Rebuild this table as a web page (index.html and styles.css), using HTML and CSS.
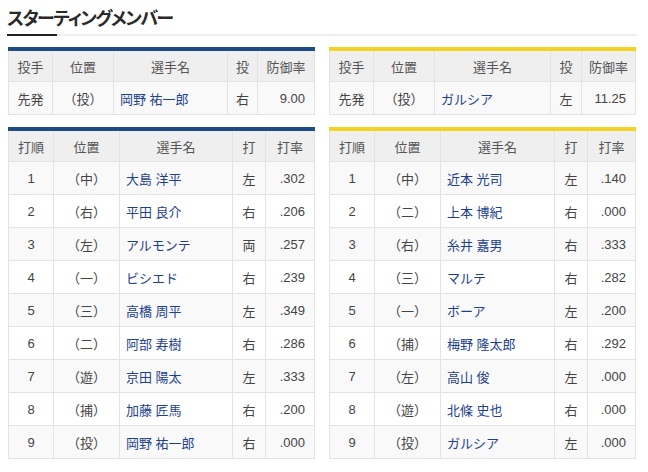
FILE: index.html
```html
<!DOCTYPE html>
<html lang="ja">
<head>
<meta charset="utf-8">
<link rel="stylesheet" href="styles.css">
</head>
<body>
<div class="page">
  <h2 class="title">スターティングメンバー</h2>
  <div class="grid">
    <table class="tbl blue pit-l">
      <colgroup><col class="c1"><col class="c2"><col class="c3"><col class="c4"><col class="c5"></colgroup>
      <thead><tr><th>投手</th><th>位置</th><th>選手名</th><th>投</th><th>防御率</th></tr></thead>
      <tbody><tr><td>先発</td><td>（投）</td><td class="name">岡野 祐一郎</td><td>右</td><td class="num">9.00</td></tr></tbody>
    </table>
    <table class="tbl yellow pit-r">
      <colgroup><col class="c1"><col class="c2"><col class="c3"><col class="c4"><col class="c5"></colgroup>
      <thead><tr><th>投手</th><th>位置</th><th>選手名</th><th>投</th><th>防御率</th></tr></thead>
      <tbody><tr><td>先発</td><td>（投）</td><td class="name">ガルシア</td><td>左</td><td class="num">11.25</td></tr></tbody>
    </table>
    <table class="tbl blue bat-l">
      <colgroup><col class="c1"><col class="c2"><col class="c3"><col class="c4"><col class="c5"></colgroup>
      <thead><tr><th>打順</th><th>位置</th><th>選手名</th><th>打</th><th>打率</th></tr></thead>
      <tbody>
        <tr><td>1</td><td>（中）</td><td class="name">大島 洋平</td><td>左</td><td class="num">.302</td></tr>
        <tr><td>2</td><td>（右）</td><td class="name">平田 良介</td><td>右</td><td class="num">.206</td></tr>
        <tr><td>3</td><td>（左）</td><td class="name">アルモンテ</td><td>両</td><td class="num">.257</td></tr>
        <tr><td>4</td><td>（一）</td><td class="name">ビシエド</td><td>右</td><td class="num">.239</td></tr>
        <tr><td>5</td><td>（三）</td><td class="name">高橋 周平</td><td>左</td><td class="num">.349</td></tr>
        <tr><td>6</td><td>（二）</td><td class="name">阿部 寿樹</td><td>右</td><td class="num">.286</td></tr>
        <tr><td>7</td><td>（遊）</td><td class="name">京田 陽太</td><td>左</td><td class="num">.333</td></tr>
        <tr><td>8</td><td>（捕）</td><td class="name">加藤 匠馬</td><td>右</td><td class="num">.200</td></tr>
        <tr><td>9</td><td>（投）</td><td class="name">岡野 祐一郎</td><td>右</td><td class="num">.000</td></tr>
      </tbody>
    </table>
    <table class="tbl yellow bat-r">
      <colgroup><col class="c1"><col class="c2"><col class="c3"><col class="c4"><col class="c5"></colgroup>
      <thead><tr><th>打順</th><th>位置</th><th>選手名</th><th>打</th><th>打率</th></tr></thead>
      <tbody>
        <tr><td>1</td><td>（中）</td><td class="name">近本 光司</td><td>左</td><td class="num">.140</td></tr>
        <tr><td>2</td><td>（二）</td><td class="name">上本 博紀</td><td>右</td><td class="num">.000</td></tr>
        <tr><td>3</td><td>（右）</td><td class="name">糸井 嘉男</td><td>右</td><td class="num">.333</td></tr>
        <tr><td>4</td><td>（三）</td><td class="name">マルテ</td><td>右</td><td class="num">.282</td></tr>
        <tr><td>5</td><td>（一）</td><td class="name">ボーア</td><td>左</td><td class="num">.200</td></tr>
        <tr><td>6</td><td>（捕）</td><td class="name">梅野 隆太郎</td><td>右</td><td class="num">.292</td></tr>
        <tr><td>7</td><td>（左）</td><td class="name">高山 俊</td><td>左</td><td class="num">.000</td></tr>
        <tr><td>8</td><td>（遊）</td><td class="name">北條 史也</td><td>右</td><td class="num">.000</td></tr>
        <tr><td>9</td><td>（投）</td><td class="name">ガルシア</td><td>左</td><td class="num">.000</td></tr>
      </tbody>
    </table>
  </div>
</div>
</body>
</html>
```
FILE: styles.css
```css
html, body {
  margin: 0;
  padding: 0;
  background: #ffffff;
}
body {
  font-family: "Liberation Sans", "Noto Sans CJK JP", sans-serif;
  color: #444444;
}
.page {
  padding: 4px 11px 0 7px;
  width: 630px;
}
.title {
  position: relative;
  margin: 0;
  font-family: "Noto Sans CJK JP", sans-serif;
  font-feature-settings: "palt";
  font-size: 18px;
  font-weight: bold;
  letter-spacing: -1.5px;
  line-height: 26px;
  color: #2a2a2a;
  padding-bottom: 4px;
  border-bottom: 2px solid #eeeeee;
}
.title::after {
  content: "";
  position: absolute;
  left: 0;
  bottom: -2px;
  width: 50px;
  height: 2px;
  background: #222222;
}
.grid {
  display: grid;
  grid-template-columns: 306px 306px;
  column-gap: 15px;
  row-gap: 12px;
  margin-top: 11px;
  padding-left: 1px;
}
.tbl {
  border-collapse: collapse;
  table-layout: fixed;
  width: 306px;
  font-size: 13px;
  border: 1px solid #e3e3e3;
}
.tbl.blue { border-top: 4px solid #1f4b85; }
.tbl.yellow { border-top: 4px solid #f3d425; }
.tbl th {
  background: #efefef;
  font-weight: normal;
  color: #555555;
  height: 30px;
  padding: 0;
  border-left: 1px solid #e3e3e3;
  border-bottom: 1px solid #e3e3e3;
  text-align: center;
}
.tbl td {
  height: 32px;
  padding: 0;
  border-left: 1px solid #e3e3e3;
  border-bottom: 1px solid #e3e3e3;
  text-align: center;
  color: #444444;
}
.tbl tbody tr:nth-child(odd) td { background: #f9f9f9; }
.tbl td.name {
  text-align: left;
  padding-left: 6px;
  color: #1d3f8f;
}
.tbl td.num {
  text-align: right;
  padding-right: 9px;
}
.pit-l .c1 { width: 44px; }
.pit-l .c2 { width: 61px; }
.pit-l .c3 { width: 114px; }
.pit-l .c4 { width: 30px; }
.pit-l .c5 { width: 57px; }
.pit-r .c1 { width: 44px; }
.pit-r .c2 { width: 61px; }
.pit-r .c3 { width: 116px; }
.pit-r .c4 { width: 31px; }
.pit-r .c5 { width: 54px; }
.bat-l .c1 { width: 45px; }
.bat-l .c2 { width: 66px; }
.bat-l .c3 { width: 113px; }
.bat-l .c4 { width: 33px; }
.bat-l .c5 { width: 49px; }
.bat-r .c1 { width: 45px; }
.bat-r .c2 { width: 66px; }
.bat-r .c3 { width: 114px; }
.bat-r .c4 { width: 33px; }
.bat-r .c5 { width: 48px; }
```
